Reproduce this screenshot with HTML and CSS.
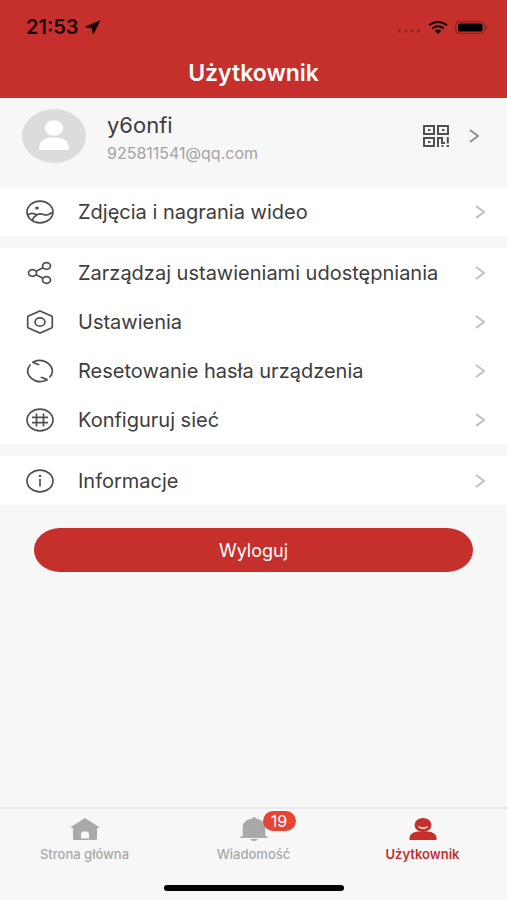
FILE: index.html
```html
<!DOCTYPE html>
<html lang="pl">
<head>
<meta charset="utf-8">
<meta name="viewport" content="width=device-width, initial-scale=1">
<title>Użytkownik</title>
<link rel="stylesheet" href="styles.css">
</head>
<body>
<svg class="sprite" aria-hidden="true">
  <symbol id="chevron" viewBox="0 0 10 14"><path d="M1 1L9 7L1 13"/></symbol>
</svg>
<header class="header">
  <div class="status">
    <span class="time">21:53</span>
    <svg class="location" viewBox="0 0 16 14"><path d="M15.500 .3L9 13.400Q8.200 14 7.500 13L7 8.500L1 7.500Q-.3 7 .8 6.200Z"/></svg>
    <div class="status-right">
      <svg class="dots" viewBox="0 0 24 4"><circle cx="2.500" cy="2" r="1.500"/><circle cx="9" cy="2" r="1.500"/><circle cx="15" cy="2" r="1.500"/><circle cx="21.500" cy="2" r="1.500"/></svg>
      <svg class="wifi" viewBox="0 0 20 13"><path d="M1 4.300Q10-2.600 19 4.300M4.300 7.500Q10 3.100 15.700 7.500"/><path class="solid" d="M6.800 9.800Q10 7.200 13.200 9.800L10 13Z"/></svg>
      <svg class="battery" viewBox="0 0 34 13"><rect class="shell" x=".7" y=".7" width="29" height="11.600" rx="3.500"/><rect x="3" y="2.500" width="24.500" height="8" rx="1.500"/><path class="cap" d="M31 4Q33.500 6.500 31 9Z"/></svg>
    </div>
  </div>
  <h1 class="title">Użytkownik</h1>
</header>
<main class="main">
  <a class="profile" href="#profile">
    <svg class="avatar" viewBox="0 0 64 54"><ellipse class="disc" cx="32" cy="27" rx="32" ry="27"/><ellipse cx="32" cy="19" rx="9.200" ry="7.800"/><path d="M17 39.500C17 31 24 28.500 32 28.500S47 31 47 39.500Q47 41 45 41H19Q17 41 17 39.500Z"/></svg>
    <span class="who"><span class="name">y6onfi</span><span class="mail">925811541@qq.com</span></span>
    <svg class="qr" viewBox="0 0 26 22"><path class="line" d="M1 1H11V9H1ZM15 1H25V9H15ZM1 13H11V21H1ZM15 22V13H19V18H22M24.800 12V18.500"/><path d="M5 4H7.500V6H5ZM19 4H21.500V6H19ZM5 16H7.500V18H5ZM18.500 20H20.500V22H18.500ZM23.500 20H26V22H23.500Z"/></svg>
    <svg class="chevron dark"><use href="#chevron"/></svg>
  </a>
  <nav class="menu" aria-label="Menu">
    <div class="group">
      <a class="row" href="#media"><svg class="icon" viewBox="0 0 28 24"><ellipse cx="14" cy="12" rx="13" ry="10.800"/><path d="M1.800 15Q6 11.500 11.500 15.500M6.500 20.500C8 15 13 12.500 17.500 14.500Q21 16.500 26 12.500"/><ellipse class="fill" cx="11" cy="8" rx="1.900" ry="1.600"/></svg><span>Zdjęcia i nagrania wideo</span><svg class="chevron"><use href="#chevron"/></svg></a>
    </div>
    <div class="group">
      <a class="row" href="#share"><svg class="icon" viewBox="0 0 28 24"><ellipse cx="6.500" cy="12" rx="4" ry="3.300"/><ellipse cx="20.500" cy="5" rx="4" ry="3.300"/><ellipse cx="20.500" cy="19" rx="4" ry="3.300"/><path d="M10 10.300L17 6.800M10 13.700L17 17.200"/></svg><span>Zarządzaj ustawieniami udostępniania</span><svg class="chevron"><use href="#chevron"/></svg></a>
      <a class="row" href="#settings"><svg class="icon" viewBox="0 0 28 24"><path d="M14 1L25.500 6Q26.300 6.500 26.300 7V17Q26.300 17.500 25.500 18L14 23L2.500 18Q1.700 17.500 1.700 17V7Q1.700 6.500 2.500 6Z"/><ellipse cx="14" cy="12" rx="5" ry="4.200"/></svg><span>Ustawienia</span><svg class="chevron"><use href="#chevron"/></svg></a>
      <a class="row" href="#reset"><svg class="icon" viewBox="0 0 28 24"><path d="M4.500 5.500C.5 10 .5 15 5.500 19.300C9.500 22.800 15 23.600 20.500 21.300M7.500 2.700C13 .4 18.500 1.200 22.500 4.700C27.500 9 27.500 14 23.500 18.500"/><path class="fill" d="M6.500 2L14 5.500L12.500 6.500L6 4ZM21.500 22L14 18.500L15.500 17.500L22 20Z"/></svg><span>Resetowanie hasła urządzenia</span><svg class="chevron"><use href="#chevron"/></svg></a>
      <a class="row" href="#network"><svg class="icon" viewBox="0 0 28 24"><ellipse cx="14" cy="12" rx="13" ry="10.800"/><path d="M10.500 5.500V18.500M17.500 5.500V18.500M6 9.300H22M6 14.700H22"/></svg><span>Konfiguruj sieć</span><svg class="chevron"><use href="#chevron"/></svg></a>
    </div>
    <div class="group">
      <a class="row" href="#info"><svg class="icon" viewBox="0 0 28 24"><ellipse cx="14" cy="12" rx="13" ry="10.800"/><path d="M14 10V17.500"/><circle class="fill" cx="14" cy="7" r="1.300"/></svg><span>Informacje</span><svg class="chevron"><use href="#chevron"/></svg></a>
    </div>
  </nav>
  <button class="logout" type="button">Wyloguj</button>
</main>
<footer class="footer">
  <nav class="tabs" aria-label="Zakładki">
    <a class="tab" href="#home"><svg class="tab-icon" viewBox="0 0 28 24"><path d="M14 1L28 10V11H26V21.500Q26 23 24 23H4Q2 23 2 21.500V11H0V10ZM10 21.500H18V17.500Q18 14.300 14 14.300T10 17.500Z" fill-rule="evenodd"/></svg><span>Strona główna</span></a>
    <a class="tab" href="#messages"><span class="bell"><svg class="tab-icon" viewBox="0 0 28 24"><path d="M12.300 1.500Q12.300 0 14 0T15.700 1.500C22 2.500 25.300 6 25.300 10V19.300H27.500V21H.5V19.300H2.700V10C2.700 6 6 2.500 12.300 1.500ZM10 22H18Q17 24 14 24T10 22Z"/></svg><span class="badge">19</span></span><span>Wiadomość</span></a>
    <a class="tab active" href="#user" aria-current="page"><svg class="tab-icon" viewBox="0 0 28 24"><ellipse cx="14" cy="8" rx="8.500" ry="7"/><path d="M.5 23V20Q2 15 9 14.500H19Q26 15 27.500 20V23Z"/><path class="smile" d="M9.500 9.500Q14 13 18.500 9.500"/></svg><span>Użytkownik</span></a>
  </nav>
  <div class="home-indicator"></div>
</footer>
</body>
</html>
```
FILE: styles.css
```css
* { box-sizing: border-box; }

body {
  margin: 0;
  min-height: 100vh;
  display: flex;
  flex-direction: column;
  background: #f7f7f7;
  color: #3d3d3d;
  font-family: Inter, "Liberation Sans", sans-serif;
}

a { color: inherit; text-decoration: none; }
svg { display: block; flex: none; }
.sprite { position: absolute; width: 0; height: 0; }

.header { background: #c6302c; }
.status {
  display: flex;
  align-items: center;
  gap: 6px;
  height: 54px;
  padding: 0 18px 0 26px;
}
.time { color: #180303; font-size: 20px; font-weight: 600; }
.location { width: 16px; height: 14px; fill: #180303; }
.status-right { display: flex; align-items: center; gap: 7px; margin-left: auto; }
.dots { width: 24px; height: 4px; margin-top: 8px; fill: #8d211e; }
.wifi { width: 20px; height: 13px; fill: none; stroke: #120202; stroke-width: 2; }
.wifi .solid { fill: #120202; stroke: none; }
.battery { width: 34px; height: 13px; fill: #000; }
.battery .shell { fill: none; stroke: #84201d; stroke-width: 1; }
.battery .cap { fill: #84201d; }
.title {
  margin: 0;
  height: 44px;
  color: #fff;
  font-size: 23px;
  line-height: 38px;
  font-weight: 600;
  text-align: center;
}

.main { flex: 1; }
.profile { display: flex; align-items: center; height: 89px; padding: 0 28px 13px 22px; }
.avatar { width: 64px; height: 54px; fill: #fff; }
.avatar .disc { fill: #dcdcdc; }
.who { display: flex; flex: 1; flex-direction: column; gap: 5px; margin-left: 21px; padding-top: 3px; }
.name { font-size: 22px; line-height: 26px; }
.mail { color: #a3a3a3; font-size: 16px; line-height: 20px; }
.qr { width: 26px; height: 22px; margin-right: 20px; fill: #505050; }
.qr .line { fill: none; stroke: #505050; stroke-width: 2; }
.chevron { width: 10px; height: 14px; fill: none; stroke: #c0c0c0; stroke-width: 2; }
.chevron.dark { stroke: #929292; }

.menu { display: grid; gap: 12px; }
.group { background: #fff; }
.row {
  display: flex;
  align-items: center;
  height: 49px;
  padding: 0 22px 0 26px;
  font-size: 20px;
}
.row span { flex: 1; margin-left: 24px; }
.icon { width: 28px; height: 24px; fill: none; stroke: #505050; stroke-width: 1.7; }
.icon .fill { fill: #505050; stroke: none; }

.logout {
  display: block;
  width: calc(100% - 68px);
  height: 44px;
  margin: 23px auto;
  padding: 0;
  border: 0;
  border-radius: 26px / 22px;
  background: #c6302c;
  color: #fff;
  font: 18px Inter, "Liberation Sans", sans-serif;
}

.footer { border-top: 2px solid #e8e8e8; }
.tabs { display: grid; grid-template-columns: repeat(3, 1fr); }
.tab {
  display: flex;
  flex-direction: column;
  align-items: center;
  gap: 5px;
  padding-top: 8px;
  color: #a9a9a9;
  font-size: 13px;
  line-height: 16px;
  font-weight: 500;
}
.tab.active { color: #c6302c; font-weight: 600; }
.tab-icon { width: 28px; height: 24px; fill: currentColor; }
.smile { fill: none; stroke: #fff; stroke-width: 1.4; }
.bell { position: relative; }
.badge {
  position: absolute;
  top: -6px;
  left: 23px;
  width: 33px;
  border-radius: 10px;
  background: #e84434;
  color: #fff;
  font-size: 16px;
  line-height: 20px;
  font-weight: 400;
  text-align: center;
}
.home-indicator {
  width: 180px;
  height: 6px;
  margin: 23px auto 9px;
  border-radius: 3px;
  background: #000;
}
```
